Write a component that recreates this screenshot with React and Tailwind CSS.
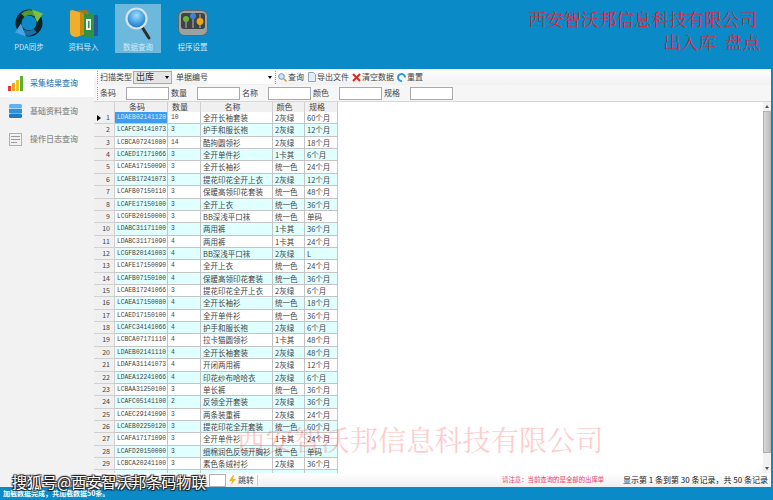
import { useState } from 'react';

const rows = [
    ['LDAEB02141120', '10', '全开长袖套装', '2灰绿', '60个月'],
    ['LCAFC34141073', '3', '护手和服长袍', '2灰绿', '12个月'],
    ['LCBCA07241080', '14', '酷拘圆领衫', '2灰绿', '18个月'],
    ['LCAED17171066', '3', '全开单件衫', '1卡其', '6个月'],
    ['LCAEA17150090', '3', '全开长袖衫', '统一色', '24个月'],
    ['LCAEB17241073', '3', '提花印花全开上衣', '2灰绿', '12个月'],
    ['LCAFB07150110', '3', '保暖高领印花套装', '统一色', '48个月'],
    ['LCAFE17150100', '3', '全开上衣', '统一色', '36个月'],
    ['LCGFB20150000', '3', 'BB深浅平口袜', '统一色', '单码'],
    ['LDABC31171100', '3', '两用裤', '1卡其', '36个月'],
    ['LDABC31171090', '4', '两用裤', '1卡其', '24个月'],
    ['LCGFB20141003', '4', 'BB深浅平口袜', '2灰绿', 'L'],
    ['LCAFE17150090', '4', '全开上衣', '统一色', '24个月'],
    ['LCAFB07150100', '4', '保暖高领印花套装', '统一色', '36个月'],
    ['LCAEB17241066', '3', '提花印花全开上衣', '2灰绿', '6个月'],
    ['LCAEA17150080', '4', '全开长袖衫', '统一色', '18个月'],
    ['LCAED17150100', '4', '全开单件衫', '统一色', '36个月'],
    ['LCAFC34141066', '4', '护手和服长袍', '2灰绿', '6个月'],
    ['LCBCA07171110', '4', '拉卡猫圆领衫', '1卡其', '48个月'],
    ['LDAEB02141110', '4', '全开长袖套装', '2灰绿', '48个月'],
    ['LDAFA31141073', '4', '开闭两用裤', '2灰绿', '12个月'],
    ['LDAEA12241066', '4', '印花纱布哈哈衣', '2灰绿', '6个月'],
    ['LCBAA31250100', '3', '单长裤', '统一色', '36个月'],
    ['LCAFC05141100', '2', '反领全开套装', '2灰绿', '36个月'],
    ['LCAEC29141090', '3', '两条装重裤', '2灰绿', '24个月'],
    ['LCAEB02250120', '3', '提花印花全开套装', '统一色', '60个月'],
    ['LCAFA17171090', '3', '全开单件衫', '1卡其', '24个月'],
    ['LCAFD20150000', '3', '细棉润色反领开胸衫', '统一色', '单码'],
    ['LCBCA20241100', '3', '素色条绒衬衫', '2灰绿', '36个月'],
    ['', '', '', '', ''],
];

const cjk = "font-['Noto_Sans_CJK_SC','Liberation_Sans',sans-serif]";
const mono = "font-['Liberation_Mono',monospace]";
const songti = "font-['Liberation_Serif','Noto_Serif_CJK_SC','Noto_Sans_CJK_SC',serif]";
const gridCols = 'grid grid-cols-[21px_53px_33px_72px_32px_33px] w-[244px]';

function SyncIcon() {
    return (
        <svg width="30" height="30" viewBox="0 0 30 30">
            <circle cx="15" cy="15" r="10.5" fill="none" stroke="#0b2329" strokeWidth="6" />
            <path d="M9 7.5A10.5 10.5 0 0 1 21 6" fill="none" stroke="#4f9a35" strokeWidth="5" />
            <path d="M18 1.5L29 5.5 23 14.5z" fill="#7cc043" />
            <path d="M21 22.5A10.5 10.5 0 0 1 9 24" fill="none" stroke="#1c6ea8" strokeWidth="5" />
            <path d="M12 28.5L1 24.5 7 15.5z" fill="#4aa3e0" />
        </svg>
    );
}

function FolderIcon() {
    return (
        <svg width="30" height="30" viewBox="0 0 30 30">
            <path d="M5 3l13-1 2 4v20H5z" fill="#a9741a" />
            <rect x="22" y="7" width="7" height="21" rx="1" fill="#245a9c" />
            <rect x="14" y="6" width="11" height="23" fill="#2f9247" />
            <rect x="17" y="11" width="5" height="11" fill="#e8f3ea" />
            <rect x="19" y="13" width="1.5" height="7" fill="#2f9247" />
            <path d="M1 4q0-2 2-2l10 3q2 1 2 3v17q0 2-2 2l-5 2q-7 0-7-5z" fill="#eeb02c" />
            <path d="M13 5q2 1 2 3v17q0 2-2 2l-2 .7V5z" fill="#c98a12" />
        </svg>
    );
}

function SearchIcon() {
    return (
        <svg width="26" height="33" viewBox="0 0 26 33">
            <defs>
                <radialGradient id="lens" cx="50%" cy="35%" r="65%">
                    <stop offset="0" stopColor="#a5dcf8" />
                    <stop offset="0.6" stopColor="#3f9fe2" />
                    <stop offset="1" stopColor="#1b6fb8" />
                </radialGradient>
            </defs>
            <path d="M17 20l7 11" stroke="#2d2d2d" strokeWidth="3" strokeLinecap="round" />
            <circle cx="11.5" cy="11.5" r="10" fill="url(#lens)" stroke="#d8e2e6" strokeWidth="2.2" />
        </svg>
    );
}

function SettingsIcon() {
    return (
        <svg width="30" height="26" viewBox="0 0 30 26">
            <rect x="0.5" y="0.5" width="29" height="25" rx="6" fill="#9aa3a2" stroke="#5f6766" />
            <rect x="3" y="3" width="24" height="16" rx="3" fill="#3d4345" />
            <rect x="7.5" y="10" width="1" height="8" fill="#b8b8b8" />
            <rect x="14.5" y="5" width="1" height="13" fill="#b8b8b8" />
            <rect x="21.5" y="4" width="1" height="14" fill="#b8b8b8" />
            <circle cx="8" cy="9" r="3" fill="#6ab52f" />
            <circle cx="15" cy="6" r="3" fill="#3f80d8" />
            <circle cx="22" cy="11.5" r="3.4" fill="#e6a91c" />
        </svg>
    );
}

function BarsIcon() {
    return (
        <svg width="15" height="15" viewBox="0 0 15 15">
            <rect x="0" y="10" width="3" height="5" fill="#e23b2e" />
            <rect x="4" y="7" width="3" height="8" fill="#f0a020" />
            <rect x="8" y="4" width="3" height="11" fill="#e8c820" />
            <rect x="12" y="0" width="3" height="15" fill="#5cb030" />
        </svg>
    );
}

function DbIcon() {
    return (
        <svg width="13" height="14" viewBox="0 0 13 14">
            <rect x="0" y="0" width="13" height="4.3" rx="1.5" fill="#5fb2ea" />
            <rect x="0" y="4.8" width="13" height="4.3" fill="#2f93dc" />
            <rect x="0" y="9.6" width="13" height="4.4" rx="1.5" fill="#1f7cc4" />
        </svg>
    );
}

function LogIcon() {
    return (
        <svg width="13" height="13" viewBox="0 0 13 13">
            <rect x="0.5" y="0.5" width="12" height="12" fill="#f2f2f2" stroke="#b0b0b0" />
            <rect x="2" y="3" width="9" height="1" fill="#999" />
            <rect x="2" y="6" width="9" height="1" fill="#999" />
            <rect x="2" y="9" width="6" height="1" fill="#999" />
        </svg>
    );
}

function NavTile({ label, active, children }) {
    return (
        <div className={`w-[46px] h-[49px] flex flex-col items-center ${active ? 'bg-white/40' : ''}`}>
            <div className="h-[38px] flex items-center justify-center">{children}</div>
            <span className={`${cjk} text-[7.5px] leading-[10px] text-[#cfe9f5] whitespace-nowrap`}>{label}</span>
        </div>
    );
}

function Grip() {
    return <div className="w-[2px] h-[13px] mx-[1px] border-l border-dotted border-[#a0a0a0] shrink-0" />;
}

function FilterBox() {
    return <div className="w-[43px] h-[13px] bg-white border border-[#a9a9a9] shrink-0" />;
}

function SideItem({ icon, label, active }) {
    return (
        <div className={`h-[28px] flex items-center pl-[8px] gap-[7px] ${active ? 'bg-white' : ''}`}>
            <div className="w-[15px] flex justify-center">{icon}</div>
            <span className={`${cjk} text-[8px] ${active ? 'text-[#3d7fb8]' : 'text-[#8c8c8c]'} font-medium whitespace-nowrap`}>{label}</span>
        </div>
    );
}

function Row({ row, index, selected, onSelect }) {
    const tinted = index % 2 === 1;
    const cell = `border-r border-b border-[#c4c4c4] pl-[2px] overflow-hidden whitespace-nowrap leading-[11px] ${tinted ? 'bg-[#e0ffff]' : 'bg-white'}`;
    return (
        <div className={`${gridCols} h-[12.36px] text-[#444]`} onClick={onSelect}>
            <div className="bg-[#f0f0f0] border-r border-b border-[#d0d0d0] text-[7px] leading-[11px] text-right pr-[4px] relative">
                {selected && <span className="absolute left-[3px] top-[3px] w-0 h-0 border-y-[3px] border-y-transparent border-l-[4px] border-l-black" />}
                {index + 1}
            </div>
            <div className={`${cell} ${mono} text-[6.3px] ${selected ? '!bg-[#3d9bf0] text-[#d8efff]' : ''}`}>{row[0]}</div>
            <div className={`${cell} ${mono} text-[6.3px] !pl-[3px]`}>{row[1]}</div>
            <div className={`${cell} ${cjk} text-[7.5px]`}>{row[2]}</div>
            <div className={`${cell} ${cjk} text-[7.5px]`}>{row[3]}</div>
            <div className={`${cell} ${cjk} text-[7.5px]`}>{row[4]}</div>
        </div>
    );
}

export default function App() {
    const [selected, setSelected] = useState(0);
    const labelCls = `${cjk} text-[8px] text-[#444] whitespace-nowrap`;
    const headCell = 'border-r border-b border-[#d0d0d0] pr-[8px]';

    return (
        <div className={`w-[773px] h-[500px] overflow-hidden flex flex-col bg-white relative ${cjk}`}>
            {/* top band */}
            <div className="h-[69px] bg-[#0a8ac6] flex justify-between shrink-0">
                <div className="flex items-start gap-[8.5px] pl-[6px] pt-[4px]">
                    <NavTile label="PDA同步"><SyncIcon /></NavTile>
                    <NavTile label="资料导入"><FolderIcon /></NavTile>
                    <NavTile label="数据查询" active><SearchIcon /></NavTile>
                    <NavTile label="程序设置"><SettingsIcon /></NavTile>
                </div>
                <div className={`flex flex-col items-end pr-[13px] pt-[9px] text-[#d9283a] ${songti} text-[17.6px] leading-[23px]`}>
                    <span className="whitespace-nowrap mr-[3px]">西安智沃邦信息科技有限公司</span>
                    <span className="whitespace-nowrap">出入库&nbsp;&nbsp;盘点</span>
                </div>
            </div>

            <div className="flex-1 flex min-h-0 border-r-2 border-[#0a8ac6]">
                {/* left menu */}
                <div className="w-[94px] bg-[#f2f2f2] shrink-0 flex flex-col">
                    <SideItem active icon={<BarsIcon />} label="采集结果查询" />
                    <SideItem icon={<DbIcon />} label="基础资料查询" />
                    <SideItem icon={<LogIcon />} label="操作日志查询" />
                </div>

                {/* main */}
                <div className="flex-1 flex flex-col min-w-0">
                    <div className="h-[16px] flex items-center bg-gradient-to-b from-white to-[#f1f1f1] pl-[2px] shrink-0">
                        <Grip />
                        <span className={labelCls}>扫描类型</span>
                        <div className="ml-[1px] w-[39px] h-[13px] bg-[#e6e6e6] border border-[#a9a9a9] flex items-center justify-between px-[2px] text-[9px] text-[#333]">
                            <span>出库</span>
                            <span className="w-0 h-0 border-x-[2.5px] border-x-transparent border-t-[3px] border-t-black" />
                        </div>
                        <span className={`${labelCls} ml-[4px]`}>单据编号</span>
                        <div className="w-[66px] h-[13px] bg-white flex items-center justify-end pr-[2px]">
                            <span className="w-0 h-0 border-x-[2.5px] border-x-transparent border-t-[3px] border-t-black" />
                        </div>
                        <Grip />
                        <span className={`${labelCls} flex items-center gap-[1px]`}>
                            <svg width="9" height="9" viewBox="0 0 9 9"><circle cx="3.5" cy="3.5" r="2.8" fill="#cfe6f7" stroke="#6c93b5" /><path d="M5.5 5.5L8.5 8.5" stroke="#c99a3a" strokeWidth="1.5" /></svg>
                            查询
                        </span>
                        <span className={`${labelCls} flex items-center gap-[1px] ml-[4px]`}>
                            <svg width="8" height="10" viewBox="0 0 8 10"><path d="M0.5 0.5h5l2 2v7h-7z" fill="#e3edf7" stroke="#8fa7c0" /></svg>
                            导出文件
                        </span>
                        <span className={`${labelCls} flex items-center gap-[1px] ml-[3px]`}>
                            <svg width="9" height="9" viewBox="0 0 9 9"><path d="M1 1l7 7M8 1L1 8" stroke="#dd2a1f" strokeWidth="2" /></svg>
                            清空数据
                        </span>
                        <span className={`${labelCls} flex items-center gap-[1px] ml-[3px]`}>
                            <svg width="9" height="9" viewBox="0 0 9 9"><path d="M8 4.5A3.5 3.5 0 1 0 5 8" fill="none" stroke="#2f9be0" strokeWidth="2" /></svg>
                            重置
                        </span>
                    </div>
                    <div className="h-[16px] flex items-center bg-[#f6f6f6] pl-[2px] shrink-0">
                        <Grip />
                        <span className={`${labelCls} w-[26px]`}>条码</span>
                        <FilterBox />
                        <span className={`${labelCls} w-[28px] pl-[2px]`}>数量</span>
                        <FilterBox />
                        <span className={`${labelCls} w-[28px] pl-[2px]`}>名称</span>
                        <FilterBox />
                        <span className={`${labelCls} w-[28px] pl-[2px]`}>颜色</span>
                        <FilterBox />
                        <span className={`${labelCls} w-[28px] pl-[2px]`}>规格</span>
                        <FilterBox />
                    </div>

                    {/* grid + scrollbar */}
                    <div className="flex-1 flex min-h-0 border-t border-[#d8d8d8]">
                        <div className="flex-1 overflow-hidden">
                            <div className={`${gridCols} h-[10px] bg-[#f0f0f0] text-[8px] leading-[10px] text-[#444] text-center`}>
                                <div className="border-r border-b border-[#d0d0d0]" />
                                <div className={headCell}>条码</div>
                                <div className={headCell}>数量</div>
                                <div className={headCell}>名称</div>
                                <div className={headCell}>颜色</div>
                                <div className={headCell}>规格</div>
                            </div>
                            {rows.map((row, i) => (
                                <Row key={i} row={row} index={i} selected={i === selected} onSelect={() => setSelected(i)} />
                            ))}
                        </div>
                        <div className="w-[8px] bg-[#f1f1f1] flex flex-col shrink-0">
                            <div className="h-[9px] flex items-center justify-center">
                                <span className="w-0 h-0 border-x-[2.5px] border-x-transparent border-b-[3px] border-b-[#555]" />
                            </div>
                            <div className="h-[342px] bg-gradient-to-r from-[#d8d8d8] to-[#bdbdbd] border border-[#b0b0b0]" />
                            <div className="flex-1" />
                            <div className="h-[9px] flex items-center justify-center">
                                <span className="w-0 h-0 border-x-[2.5px] border-x-transparent border-t-[3px] border-t-[#555]" />
                            </div>
                        </div>
                    </div>

                    {/* pager */}
                    <div className="h-[14px] bg-gradient-to-b from-white to-[#efefef] flex items-center shrink-0 pl-[115px] pr-[3px] relative z-10">
                        <div className="w-[17px] h-[13px] bg-white border border-[#b0b0b0]" />
                        <svg className="ml-[3px]" width="7" height="10" viewBox="0 0 7 10"><path d="M4 0L0 6h3l-1 4 5-6H4l1-4z" fill="#f0b429" /></svg>
                        <span className={`${labelCls} ml-[2px]`}>跳转</span>
                        <div className="w-px h-[11px] bg-[#cfcfcf] ml-[3px]" />
                        <span className={`${cjk} text-[6.4px] text-[#e6406a] ml-[244px] whitespace-nowrap`}>请注意：当前查询的是全部的出库单</span>
                        <span className={`${cjk} text-[8px] text-[#222] ml-auto whitespace-nowrap`}>显示第 1 条到第 30 条记录，共 50 条记录</span>
                    </div>
                </div>
            </div>

            {/* status bar */}
            <div className="h-[13px] bg-[#0a8ac6] shrink-0 flex items-center pl-[3px] text-white text-[7px] font-bold whitespace-nowrap">
                加载数据完成，共加载数据50条。
            </div>

            {/* overlaid watermarks */}
            <div className={`absolute left-[237px] top-[424px] text-[28.2px] leading-[36px] text-[#ff0000]/20 whitespace-nowrap pointer-events-none ${songti} z-20`}>
                西安智沃邦信息科技有限公司
            </div>
            <div className="absolute left-[12px] top-[472px] text-[15px] leading-[20px] text-white whitespace-nowrap pointer-events-none z-20 [text-shadow:1px_1px_1px_#222,-1px_-1px_1px_#222,1px_-1px_1px_#222,-1px_1px_1px_#222]">
                搜狐号@西安智沃邦条码物联
            </div>
        </div>
    );
}
